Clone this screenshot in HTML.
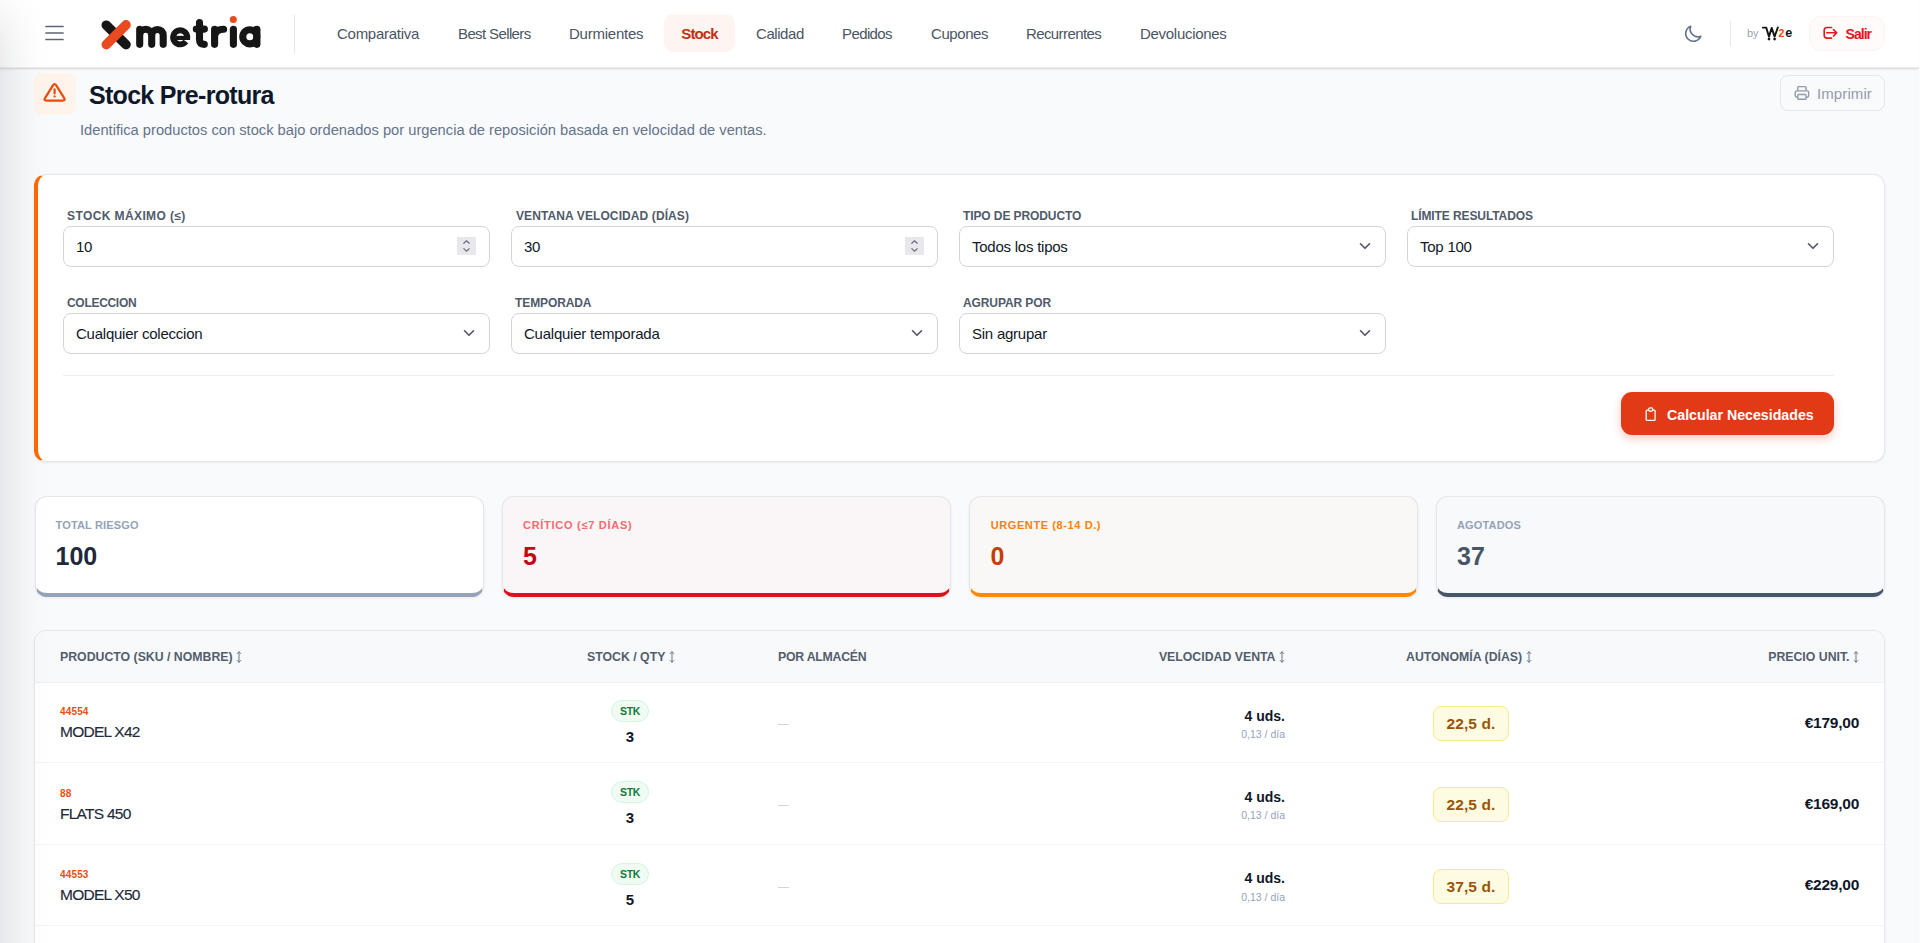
<!DOCTYPE html>
<html lang="es">
<head>
<meta charset="utf-8">
<title>Stock Pre-rotura</title>
<style>
*{box-sizing:border-box;margin:0;padding:0}
html,body{width:1920px;height:943px;overflow:hidden}
body{font-family:"Liberation Sans",sans-serif;background:#f8fafc;color:#0f172a;position:relative}
.abs{position:absolute}
#shade{position:absolute;left:-400px;top:16px;width:400px;height:1400px;box-shadow:0 0 46px rgba(20,24,32,0.16);z-index:50;pointer-events:none}
header{position:absolute;left:0;top:0;width:1919px;height:69px;background:#fff;border-bottom:1px solid #dfdfe0;box-shadow:inset 0 -1px 0 #ededee,0 1px 2px rgba(0,0,0,0.05);z-index:5}
.nav{position:absolute;top:15px;height:37px;line-height:37px;font-size:15px;color:#4b5563;white-space:nowrap;letter-spacing:-0.3px}
.nav.active{top:14px;height:38px;line-height:39px;background:#fef5f3;color:#c4300f;font-weight:bold;border-radius:9px;text-align:center}

.ttl{position:absolute;left:89px;top:79px;font-size:25px;font-weight:bold;color:#0f172a;letter-spacing:-0.7px;white-space:nowrap;line-height:32px}
.sub{position:absolute;left:80px;top:120px;font-size:14.7px;color:#64748b;white-space:nowrap;line-height:20px}
.card{position:absolute;background:#fff;border:1px solid #e5e7eb;border-radius:12px}
.lbl{position:absolute;font-size:12px;font-weight:bold;color:#505a6a;letter-spacing:-0.1px;white-space:nowrap;line-height:14px;text-transform:uppercase}
.inp{position:absolute;width:427px;height:41px;border:1px solid #d1d5db;border-radius:8px;background:#fff;font-size:15px;color:#111827;line-height:39px;padding-left:12px;white-space:nowrap;letter-spacing:-0.24px}
.spin{position:absolute;right:13px;top:10px;width:19px;height:18px;background:#e7e7ec}
.chev{position:absolute;right:14px;top:13px}
.stat{position:absolute;top:496px;width:449px;height:101px;border:1px solid #e5e7eb;border-radius:12px;border-bottom-width:4px;box-shadow:0 1px 3px rgba(15,23,42,0.08)}
.stat .sl{position:absolute;left:20px;top:21px;font-size:11px;font-weight:bold;letter-spacing:0.15px;white-space:nowrap;line-height:14px}
.stat .sv{position:absolute;left:20px;top:44px;font-size:25px;font-weight:bold;white-space:nowrap;line-height:30px}
.th{position:absolute;top:650px;font-size:12.3px;font-weight:bold;color:#535d6d;white-space:nowrap;line-height:14px}
.sku{position:absolute;left:60px;font-size:10px;letter-spacing:0.15px;font-weight:bold;color:#eb4f0e;line-height:12px}
.pname{position:absolute;left:60px;font-size:15.5px;color:#1e293b;line-height:18px;white-space:nowrap;letter-spacing:-0.75px;-webkit-text-stroke:0.15px #1e293b}
.stk{position:absolute;left:611px;width:38px;height:22px;border-radius:11px;background:#effbf3;border:1px solid #d3f6df;color:#117a35;font-size:10.5px;font-weight:bold;text-align:center;line-height:20px;letter-spacing:-0.3px}
.qty{position:absolute;left:600px;width:60px;text-align:center;font-size:15px;font-weight:bold;color:#0f172a;line-height:18px}
.dash{position:absolute;left:778px;width:11px;height:1px;background:#d1d5db}
.uds{position:absolute;right:635px;font-size:14px;font-weight:bold;color:#0f172a;line-height:18px;white-space:nowrap}
.dia{position:absolute;right:635px;font-size:10.5px;color:#94a3b8;line-height:12px;white-space:nowrap}
.aut{position:absolute;left:1433px;width:76px;height:35px;border-radius:8px;background:#fefbe3;border:1px solid #fde88a;color:#9b5307;font-size:15.5px;font-weight:bold;text-align:center;line-height:33px;letter-spacing:0.1px}
.price{position:absolute;right:61px;font-size:15.5px;letter-spacing:-0.25px;font-weight:bold;color:#0f172a;line-height:18px;white-space:nowrap}
.rowsep{position:absolute;left:35px;width:1849px;height:1px;background:#f1f3f6}
</style>
</head>
<body>
<div id="shade"></div>
<div style="position:absolute;left:1919px;top:0;width:1px;height:943px;background:#fcfcfd;z-index:60"></div>
<header>
  <!-- hamburger -->
  <svg class="abs" style="left:44px;top:24px" width="22" height="18" viewBox="0 0 22 18">
    <path d="M2 2.5H19M2 9H19M2 15.5H19" stroke="#5b6577" stroke-width="1.7" stroke-linecap="round"/>
  </svg>
  <!-- logo -->
  <svg class="abs" style="left:0;top:0" width="280" height="68" viewBox="0 0 280 68">
    <g stroke-linecap="round" fill="none">
      <line x1="106.3" y1="25.2" x2="126" y2="44.6" stroke="#161616" stroke-width="9.6"/>
      <line x1="126" y1="24.9" x2="106.3" y2="44.6" stroke="#e94a1f" stroke-width="9.6"/>
      <g stroke="#161616" stroke-width="7.1" stroke-linejoin="round">
        <path d="M139.7 44.35V29.3M139.7 35.2A6 6 0 0 1 151.7 35.2V44.35M151.7 35.2A5.75 5.75 0 0 1 163.2 35.2V44.35"/>
        <path d="M187.3 37.3A7.1 7.1 0 1 0 185.9 41.6" stroke-width="5.8" stroke-linecap="butt"/><path d="M173 37.9H190.1" stroke-width="4.2" stroke-linecap="butt"/>
        <path d="M199.5 22.6V39.5Q199.5 44.35 204.3 44.35M196.3 29.1H204.4"/>
        <path d="M214.6 44.35V29.3M214.6 36.5Q215 29.3 223.6 29.3"/>
        <path d="M233.4 44.35V29.3"/>
        <circle cx="249.8" cy="36.8" r="7.05"/>
        <path d="M256.9 29.3V44.35"/>
      </g>
      <circle cx="233.3" cy="19.5" r="3.5" fill="#e94a1f" stroke="none"/>
    </g>
  </svg>
  <div class="abs" style="left:294px;top:15px;width:1px;height:38px;background:#e5e7eb"></div>
  <div class="nav" style="left:337px;letter-spacing:-0.27px">Comparativa</div>
  <div class="nav" style="left:458px;letter-spacing:-0.62px">Best Sellers</div>
  <div class="nav" style="left:569px;letter-spacing:-0.23px">Durmientes</div>
  <div class="nav active" style="left:664px;width:71px;letter-spacing:-0.9px">Stock</div>
  <div class="nav" style="left:756px;letter-spacing:-0.44px">Calidad</div>
  <div class="nav" style="left:842px;letter-spacing:-0.6px">Pedidos</div>
  <div class="nav" style="left:931px;letter-spacing:-0.43px">Cupones</div>
  <div class="nav" style="left:1026px;letter-spacing:-0.6px">Recurrentes</div>
  <div class="nav" style="left:1140px;letter-spacing:-0.29px">Devoluciones</div>
  <!-- moon -->
  <svg class="abs" style="left:1682px;top:23px" width="22" height="22" viewBox="0 0 24 24">
    <path d="M20.5 14.5A8.5 8.5 0 0 1 9.5 3.5A8.5 8.5 0 1 0 20.5 14.5Z" fill="none" stroke="#64748b" stroke-width="1.8" stroke-linejoin="round"/>
  </svg>
  <div class="abs" style="left:1730px;top:21px;width:1px;height:25px;background:#e5e7eb"></div>
  <div class="abs" style="left:1747px;top:27px;font-size:11px;color:#9ca3af;line-height:12px">by</div>
  <svg class="abs" style="left:1762px;top:25px" width="32" height="18" viewBox="0 0 32 18">
    <path d="M0.9 2.6H4.2L7 11.6L9.7 2.9L12.6 11.6L15.8 2.5" fill="none" stroke="#141414" stroke-width="1.9" stroke-linejoin="round" stroke-linecap="round"/>
    <circle cx="7" cy="14.1" r="1.35" fill="#141414"/><circle cx="12.6" cy="14.1" r="1.35" fill="#141414"/>
    <text x="16.4" y="11.6" font-family="Liberation Sans" font-weight="bold" font-size="10.5" fill="#f0441c">2</text>
    <text x="23.2" y="11.9" font-family="Liberation Sans" font-weight="bold" font-size="13" fill="#141414" textLength="7" lengthAdjust="spacingAndGlyphs">e</text>
  </svg>
  <div class="abs" style="left:1809px;top:16px;width:76px;height:35px;border-radius:12px;background:#fffbfb;border:1px solid #fdf1f1"></div>
  <svg class="abs" style="left:1822px;top:26px" width="17" height="14" viewBox="0 0 17 14">
    <path d="M9.6 1.5H5Q2.2 1.5 2.2 4.3V9.3Q2.2 12.1 5 12.1H9.6M4.8 6.8H14.6M11.5 3.6L14.7 6.8L11.5 10" fill="none" stroke="#e8141f" stroke-width="1.6" stroke-linecap="round" stroke-linejoin="round"/>
  </svg>
  <div class="abs" style="left:1845.5px;top:26px;font-size:14px;font-weight:bold;color:#e8141f;line-height:17px;letter-spacing:-0.95px">Salir</div>
</header>

<!-- title -->
<div class="abs" style="left:34px;top:73px;width:42px;height:42px;border-radius:8px;background:#fff4eb"></div>
<svg class="abs" style="left:34px;top:73px" width="42" height="42" viewBox="0 0 42 42">
  <path d="M19.1 12.2Q20.6 9.8 22.1 12.2L30.2 25.2Q31.6 27.6 28.8 27.6H12.4Q9.6 27.6 11 25.2Z" fill="none" stroke="#ea4a0c" stroke-width="2.2" stroke-linejoin="round"/>
  <path d="M20.6 16.4V20.4" stroke="#ea4a0c" stroke-width="2.2" stroke-linecap="round"/>
  <circle cx="20.6" cy="23.4" r="1.15" fill="#ea4a0c"/>
</svg>
<div class="ttl">Stock Pre-rotura</div>
<div class="sub">Identifica productos con stock bajo ordenados por urgencia de reposición basada en velocidad de ventas.</div>
<!-- imprimir -->
<div class="abs" style="left:1780px;top:75px;width:105px;height:36px;border:1px solid #e5e7eb;border-radius:8px;background:#f9fafb"></div>
<svg class="abs" style="left:1792px;top:84px" width="20" height="18" viewBox="0 0 20 18">
  <path d="M5.8 6.6V3.5Q5.8 2.6 6.7 2.6H13.1Q14 2.6 14 3.5V6.6M5.6 13.2H4.9Q3.2 13.2 3.2 11.5V8.6Q3.2 6.9 4.9 6.9H15Q16.7 6.9 16.7 8.6V11.5Q16.7 13.2 15 13.2H14.2M6.6 10.5H13.2Q14 10.5 14 11.3V14.4Q14 15.2 13.2 15.2H6.6Q5.8 15.2 5.8 14.4V11.3Q5.8 10.5 6.6 10.5Z" fill="none" stroke="#929bab" stroke-width="1.4" stroke-linejoin="round"/>
</svg>
<div class="abs" style="left:1817px;top:85px;font-size:15px;color:#929bab;line-height:17px;letter-spacing:0.1px">Imprimir</div>

<!-- filter card -->
<div class="card" style="left:34px;top:174px;width:1851px;height:288px;border-left:4px solid #ff6700;box-shadow:0 1px 3px rgba(0,0,0,0.07)"></div>
<div class="lbl" style="left:67px;top:209px;letter-spacing:0.4px">Stock máximo (≤)</div>
<div class="lbl" style="left:516px;top:209px;letter-spacing:0.1px">Ventana velocidad (días)</div>
<div class="lbl" style="left:963px;top:209px">Tipo de producto</div>
<div class="lbl" style="left:1411px;top:209px">Límite resultados</div>
<div class="inp" style="left:63px;top:226px">10<div class="spin"><svg width="19" height="18" viewBox="0 0 19 18" style="position:absolute;left:0;top:0"><path d="M6.8 6.3L9.5 3.7L12.2 6.3M6.8 11.6L9.5 14.2L12.2 11.6" fill="none" stroke="#6e7280" stroke-width="1.2" stroke-linecap="round" stroke-linejoin="round"/></svg></div></div>
<div class="inp" style="left:511px;top:226px">30<div class="spin"><svg width="19" height="18" viewBox="0 0 19 18" style="position:absolute;left:0;top:0"><path d="M6.8 6.3L9.5 3.7L12.2 6.3M6.8 11.6L9.5 14.2L12.2 11.6" fill="none" stroke="#6e7280" stroke-width="1.2" stroke-linecap="round" stroke-linejoin="round"/></svg></div></div>
<div class="inp" style="left:959px;top:226px">Todos los tipos<svg class="chev" width="12" height="12" viewBox="0 0 12 12"><path d="M1.5 3.8L6 8.3L10.5 3.8" fill="none" stroke="#4b5563" stroke-width="1.6" stroke-linecap="round" stroke-linejoin="round"/></svg></div>
<div class="inp" style="left:1407px;top:226px">Top 100<svg class="chev" width="12" height="12" viewBox="0 0 12 12"><path d="M1.5 3.8L6 8.3L10.5 3.8" fill="none" stroke="#4b5563" stroke-width="1.6" stroke-linecap="round" stroke-linejoin="round"/></svg></div>
<div class="lbl" style="left:67px;top:296px;letter-spacing:-0.3px">Coleccion</div>
<div class="lbl" style="left:515px;top:296px">Temporada</div>
<div class="lbl" style="left:963px;top:296px">Agrupar por</div>
<div class="inp" style="left:63px;top:313px">Cualquier coleccion<svg class="chev" width="12" height="12" viewBox="0 0 12 12"><path d="M1.5 3.8L6 8.3L10.5 3.8" fill="none" stroke="#4b5563" stroke-width="1.6" stroke-linecap="round" stroke-linejoin="round"/></svg></div>
<div class="inp" style="left:511px;top:313px">Cualquier temporada<svg class="chev" width="12" height="12" viewBox="0 0 12 12"><path d="M1.5 3.8L6 8.3L10.5 3.8" fill="none" stroke="#4b5563" stroke-width="1.6" stroke-linecap="round" stroke-linejoin="round"/></svg></div>
<div class="inp" style="left:959px;top:313px">Sin agrupar<svg class="chev" width="12" height="12" viewBox="0 0 12 12"><path d="M1.5 3.8L6 8.3L10.5 3.8" fill="none" stroke="#4b5563" stroke-width="1.6" stroke-linecap="round" stroke-linejoin="round"/></svg></div>
<div class="abs" style="left:63px;top:375px;width:1771px;height:1px;background:#eceef2"></div>
<div class="abs" style="left:1621px;top:392px;width:213px;height:43px;border-radius:11px;background:#e23a16;box-shadow:0 4px 10px rgba(226,58,22,0.25)"></div>
<svg class="abs" style="left:1643px;top:405px" width="15" height="17" viewBox="0 0 15 17">
  <path d="M5.3 5.2H4.1Q3.2 5.2 3.2 6.1V14.4Q3.2 15.3 4.1 15.3H11.2Q12.1 15.3 12.1 14.4V6.1Q12.1 5.2 11.2 5.2H10" fill="none" stroke="#fff" stroke-width="1.3" stroke-linejoin="round"/>
  <rect x="5.5" y="2.9" width="4.3" height="3.3" rx="1.6" fill="none" stroke="#fff" stroke-width="1.3"/>
</svg>
<div class="abs" style="left:1667px;top:407px;font-size:14.2px;font-weight:bold;color:#fff;line-height:17px;white-space:nowrap">Calcular Necesidades</div>

<!-- stats -->
<div class="stat" style="left:34.5px;background:#fff;border-bottom-color:#94a3b8"><div class="sl" style="color:#94a3b8">TOTAL RIESGO</div><div class="sv" style="color:#1e293b">100</div></div>
<div class="stat" style="left:502px;background:#faf6f7;border-bottom-color:#de111a"><div class="sl" style="color:#f76a70;letter-spacing:0.72px">CRÍTICO (≤7 DÍAS)</div><div class="sv" style="color:#bf0a14">5</div></div>
<div class="stat" style="left:969px;background:#faf8f6;border-bottom-color:#fd8a06"><div class="sl" style="color:#fb8107;letter-spacing:0.6px;left:20.7px">URGENTE (8-14 D.)</div><div class="sv" style="color:#c73e05;left:20.5px">0</div></div>
<div class="stat" style="left:1436px;background:#f8f9fb;border-bottom-color:#475569"><div class="sl" style="color:#94a3b8">AGOTADOS</div><div class="sv" style="color:#475569">37</div></div>

<!-- table -->
<div class="card" style="left:34px;top:630px;width:1851px;height:340px;overflow:hidden;box-shadow:0 1px 3px rgba(15,23,42,0.06)">
  <div style="position:absolute;left:0;top:0;width:100%;height:52px;background:#f8f9fb;border-bottom:1px solid #eef0f3"></div>
</div>
<div class="th" style="left:60px">PRODUCTO (SKU / NOMBRE)<svg width="6" height="12" viewBox="0 0 6 12" style="margin-left:3.5px;vertical-align:-1.5px"><path d="M3 0.8V11.2M1.2 2.6L3 0.8L4.8 2.6M1.2 9.4L3 11.2L4.8 9.4" fill="none" stroke="#6b7585" stroke-width="1" stroke-linecap="round" stroke-linejoin="round"/></svg></div>
<div class="th" style="left:587px">STOCK / QTY<svg width="6" height="12" viewBox="0 0 6 12" style="margin-left:3.5px;vertical-align:-1.5px"><path d="M3 0.8V11.2M1.2 2.6L3 0.8L4.8 2.6M1.2 9.4L3 11.2L4.8 9.4" fill="none" stroke="#6b7585" stroke-width="1" stroke-linecap="round" stroke-linejoin="round"/></svg></div>
<div class="th" style="left:778px;letter-spacing:-0.24px">POR ALMACÉN</div>
<div class="th" style="right:635px">VELOCIDAD VENTA<svg width="6" height="12" viewBox="0 0 6 12" style="margin-left:3.5px;vertical-align:-1.5px"><path d="M3 0.8V11.2M1.2 2.6L3 0.8L4.8 2.6M1.2 9.4L3 11.2L4.8 9.4" fill="none" stroke="#6b7585" stroke-width="1" stroke-linecap="round" stroke-linejoin="round"/></svg></div>
<div class="th" style="left:1406px">AUTONOMÍA (DÍAS)<svg width="6" height="12" viewBox="0 0 6 12" style="margin-left:3.5px;vertical-align:-1.5px"><path d="M3 0.8V11.2M1.2 2.6L3 0.8L4.8 2.6M1.2 9.4L3 11.2L4.8 9.4" fill="none" stroke="#6b7585" stroke-width="1" stroke-linecap="round" stroke-linejoin="round"/></svg></div>
<div class="th" style="right:61px">PRECIO UNIT.<svg width="6" height="12" viewBox="0 0 6 12" style="margin-left:3.5px;vertical-align:-1.5px"><path d="M3 0.8V11.2M1.2 2.6L3 0.8L4.8 2.6M1.2 9.4L3 11.2L4.8 9.4" fill="none" stroke="#6b7585" stroke-width="1" stroke-linecap="round" stroke-linejoin="round"/></svg></div>
<div class="sku" style="top:706.3px">44554</div>
<div class="pname" style="top:723.2px">MODEL X42</div>
<div class="stk" style="top:700.0px">STK</div>
<div class="qty" style="top:728.0px">3</div>
<div class="dash" style="top:724.0px"></div>
<div class="uds" style="top:706.7px">4 uds.</div>
<div class="dia" style="top:728.0px">0,13 / día</div>
<div class="aut" style="top:706.0px">22,5 d.</div>
<div class="price" style="top:713.8px">€179,00</div>
<div class="rowsep" style="top:762px"></div>
<div class="sku" style="top:787.6px">88</div>
<div class="pname" style="top:804.5px">FLATS 450</div>
<div class="stk" style="top:781.3px">STK</div>
<div class="qty" style="top:809.3px">3</div>
<div class="dash" style="top:805.3px"></div>
<div class="uds" style="top:788.0px">4 uds.</div>
<div class="dia" style="top:809.3px">0,13 / día</div>
<div class="aut" style="top:787.3px">22,5 d.</div>
<div class="price" style="top:795.1px">€169,00</div>
<div class="rowsep" style="top:844px"></div>
<div class="sku" style="top:868.9px">44553</div>
<div class="pname" style="top:885.8px">MODEL X50</div>
<div class="stk" style="top:862.6px">STK</div>
<div class="qty" style="top:890.6px">5</div>
<div class="dash" style="top:886.6px"></div>
<div class="uds" style="top:869.3px">4 uds.</div>
<div class="dia" style="top:890.6px">0,13 / día</div>
<div class="aut" style="top:868.6px">37,5 d.</div>
<div class="price" style="top:876.4px">€229,00</div>
<div class="rowsep" style="top:925px"></div>
</body>
</html>
